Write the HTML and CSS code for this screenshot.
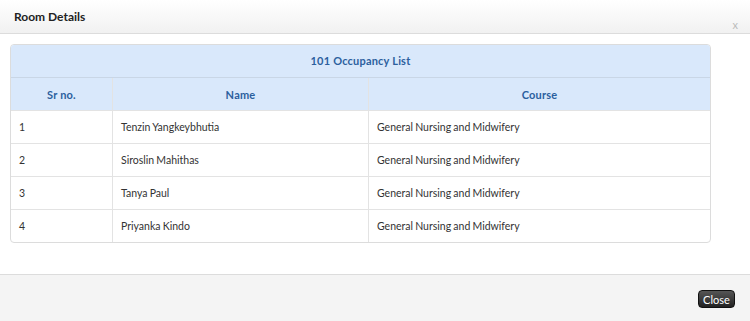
FILE: index.html
```html
<!DOCTYPE html>
<html lang="en">
<head>
  <meta charset="UTF-8" />
  <title>Room Details</title>
  <link rel="stylesheet" href="styles.css">
</head>
<body>
  <div class="modal">
    <div class="modal-header">
      <h3>Room Details</h3>
      <span class="close-x">x</span>
    </div>

    <div class="modal-body">
      <div class="list-box">
        <div class="list-title">101 Occupancy List</div>
        <table>
          <thead>
            <tr>
              <th class="col-sr">Sr no.</th>
              <th class="col-name">Name</th>
              <th>Course</th>
            </tr>
          </thead>
          <tbody>
            <tr><td>1</td><td>Tenzin Yangkeybhutia</td><td>General Nursing and Midwifery</td></tr>
            <tr><td>2</td><td>Siroslin Mahithas</td><td>General Nursing and Midwifery</td></tr>
            <tr><td>3</td><td>Tanya Paul</td><td>General Nursing and Midwifery</td></tr>
            <tr><td>4</td><td>Priyanka Kindo</td><td>General Nursing and Midwifery</td></tr>
          </tbody>
        </table>
      </div>
    </div>

    <div class="modal-footer">
      <button class="btn-close">Close</button>
    </div>
  </div>
</body>
</html>
```

FILE: styles.css
```css
body {
  margin: 0;
  font-family: Lato, "Noto Sans", sans-serif;
  font-size: 11px;
  color: #333;
  background: #fff;
}
.modal {
  width: 750px;
  height: 321px;
  display: flex;
  flex-direction: column;
}
.modal-header {
  height: 34px;
  box-sizing: border-box;
  background: linear-gradient(#ffffff, #f1f1f1);
  border-bottom: 1px solid #dcdcdc;
  display: flex;
  justify-content: space-between;
  padding: 0 14px;
}
.modal-header h3 {
  margin: 0;
  font-size: 12px;
  font-weight: bold;
  color: #222;
  line-height: 34px;
  padding-bottom: 2px;
}
.close-x {
  color: #bbb;
  font-size: 11px;
  padding-top: 18px;
  margin-right: -2px;
}
.modal-body {
  flex: 1;
  padding: 10px 39px 0 10px;
}
.list-box {
  border: 1px solid #dcdcdc;
  border-radius: 4px;
  overflow: hidden;
}
.list-title {
  background: #d9e8fb;
  color: #2c5f9e;
  font-weight: bold;
  text-align: center;
  letter-spacing: 0.2px;
  height: 32px;
  line-height: 32px;
  border-bottom: 1px solid #c9d6e6;
}
table {
  width: 100%;
  border-collapse: collapse;
}
th {
  background: #d9e8fb;
  color: #2c5f9e;
  font-weight: bold;
  letter-spacing: 0.2px;
  height: 32px;
  padding: 0;
}
td {
  height: 32px;
  padding: 0 0 0 8px;
  border-top: 1px solid #e3e3e3;
  font-size: 10.5px;
  word-spacing: -0.5px;
}
th, td {
  border-left: 1px solid #e3e3e3;
}
th:first-child, td:first-child {
  border-left: none;
}
.col-sr {
  width: 101px;
}
.col-name {
  width: 255px;
}
.modal-footer {
  height: 47px;
  box-sizing: border-box;
  background: #f4f4f4;
  border-top: 1px solid #dcdcdc;
  display: flex;
  justify-content: flex-end;
  align-items: flex-start;
  padding: 15px 15px 0 0;
}
.btn-close {
  background: linear-gradient(#555, #222);
  color: #fff;
  border: 1px solid #111;
  border-radius: 4px;
  font-family: inherit;
  font-size: 11px;
  height: 18px;
  width: 37px;
  padding: 0;
}
```
